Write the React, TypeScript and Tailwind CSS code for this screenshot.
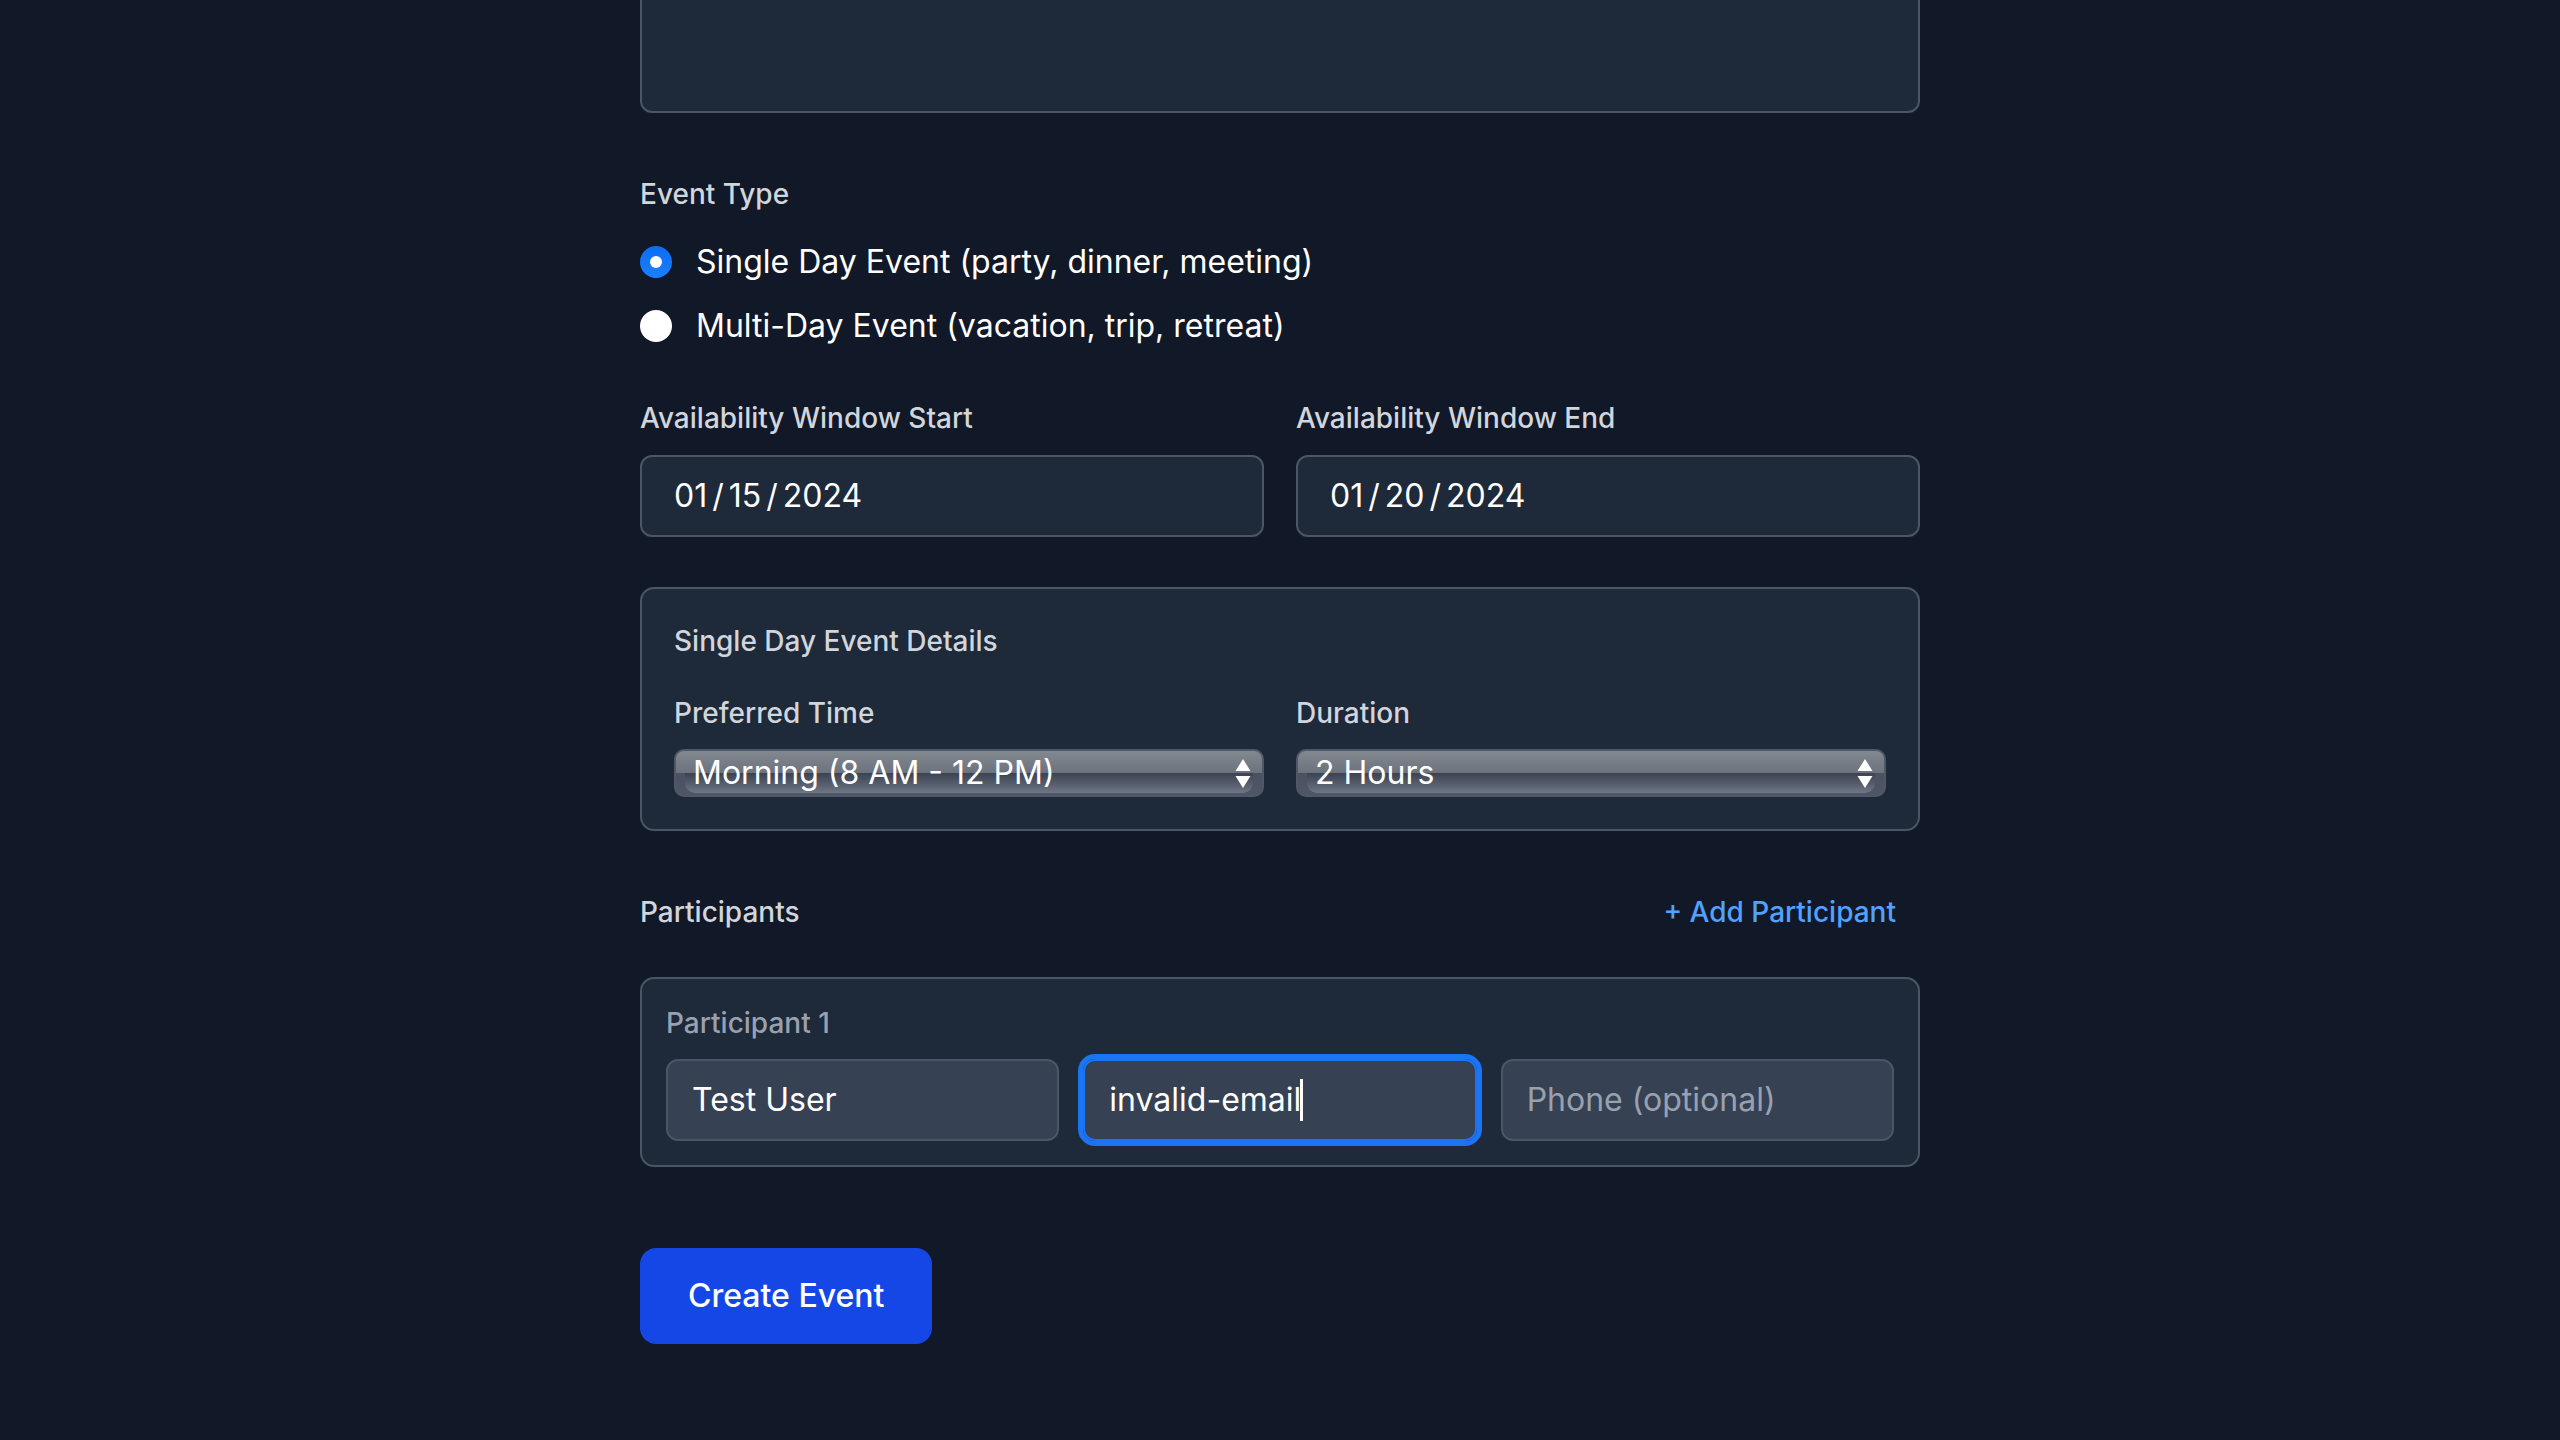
import React from 'react'

function FieldLabel({ children }: { children: React.ReactNode }) {
  return (
    <div className="mb-[17px] text-[28px] leading-[40px] font-medium text-gray-300">
      {children}
    </div>
  )
}

function Radio({ checked, label }: { checked: boolean; label: string }) {
  return (
    <div className="flex h-[48px] items-center">
      {checked ? (
        <div className="flex h-[32px] w-[32px] items-center justify-center rounded-full bg-[linear-gradient(to_bottom,#0d6cf4,#1a80ff)]">
          <div className="h-[12px] w-[12px] rounded-full bg-white" />
        </div>
      ) : (
        <div className="h-[32px] w-[32px] rounded-full bg-white" />
      )}
      <span className="ml-[24px] text-[32px] leading-[48px] text-white">{label}</span>
    </div>
  )
}

function DateField({ parts }: { parts: string[] }) {
  return (
    <div className="flex h-[82px] items-center gap-[5px] rounded-[12px] border-2 border-gray-600 bg-gray-800 px-[32px] text-[32px] text-white">
      <span>{parts[0]}</span>
      <span>/</span>
      <span>{parts[1]}</span>
      <span>/</span>
      <span>{parts[2]}</span>
    </div>
  )
}

function GlossySelect({ value }: { value: string }) {
  return (
    <div className="relative h-[48px] overflow-hidden rounded-[10px] border-2 border-[#505868] bg-[linear-gradient(to_bottom,#82888f_0%,#6d737e_50%,#4a5161_50%,#4f5666_100%)]">
      <div className="absolute bottom-[2px] left-[9px] right-[9px] top-[22px] rounded-b-[10px] bg-[linear-gradient(to_bottom,#3b4252,#565d6c_55%,#6f7686)]" />
      <div className="relative flex h-full items-center justify-between pl-[17px] pr-[11px]">
        <span className="text-[32px] leading-none text-white">{value}</span>
        <svg width="16" height="29" viewBox="0 0 16 29" className="fill-white">
          <polygon points="8,0 15.5,12 0.5,12" />
          <polygon points="0.5,17 15.5,17 8,29" />
        </svg>
      </div>
    </div>
  )
}

export default function App() {
  return (
    <div className="min-h-screen overflow-hidden bg-[#111827] font-['Inter',sans-serif]">
      <div className="mx-auto max-w-[1344px] px-[32px] pb-[96px]">
        {/* Description textarea, scrolled partly out of view */}
        <div className="-mt-[127px] h-[240px] w-full rounded-[12px] border-2 border-gray-600 bg-gray-800" />

        {/* Event type */}
        <div className="mt-[61px]">
          <div className="mb-[24px] text-[28px] leading-[40px] font-medium text-gray-300">
            Event Type
          </div>
          <div className="flex flex-col gap-[16px]">
            <Radio checked label="Single Day Event (party, dinner, meeting)" />
            <Radio checked={false} label="Multi-Day Event (vacation, trip, retreat)" />
          </div>
        </div>

        {/* Availability window */}
        <div className="mt-[48px] grid grid-cols-2 gap-[32px]">
          <div>
            <FieldLabel>Availability Window Start</FieldLabel>
            <DateField parts={['01', '15', '2024']} />
          </div>
          <div>
            <FieldLabel>Availability Window End</FieldLabel>
            <DateField parts={['01', '20', '2024']} />
          </div>
        </div>

        {/* Single day details */}
        <div className="mt-[50px] rounded-[14px] border-2 border-gray-600 bg-gray-800 p-[32px]">
          <div className="mb-[32px] text-[28px] leading-[40px] font-medium text-gray-300">
            Single Day Event Details
          </div>
          <div className="grid grid-cols-2 gap-[32px]">
            <div>
              <div className="mb-[16px] text-[28px] leading-[40px] font-medium text-gray-300">
                Preferred Time
              </div>
              <GlossySelect value="Morning (8 AM - 12 PM)" />
            </div>
            <div>
              <div className="mb-[16px] text-[28px] leading-[40px] font-medium text-gray-300">
                Duration
              </div>
              <GlossySelect value="2 Hours" />
            </div>
          </div>
        </div>

        {/* Participants */}
        <div className="mt-[48px] flex h-[66px] items-center justify-between">
          <span className="text-[28px] leading-[40px] font-medium text-gray-300">Participants</span>
          <button className="px-[24px] text-[28px] leading-[40px] font-medium text-blue-400">
            + Add Participant
          </button>
        </div>

        <div className="mt-[32px] rounded-[14px] border-2 border-gray-600 bg-gray-800 p-[24px]">
          <div className="mb-[16px] text-[28px] leading-[40px] font-medium text-gray-400">
            Participant 1
          </div>
          <div className="grid grid-cols-3 gap-[24px]">
            <div className="flex h-[82px] items-center rounded-[12px] border-2 border-gray-600 bg-gray-700 px-[24px] text-[32px] text-white">
              Test User
            </div>
            <div className="flex h-[82px] items-center rounded-[12px] border-2 border-[#1b74f4] bg-gray-700 px-[24px] text-[32px] text-white outline-[5px] outline-[#1b74f4]">
              <span>invalid-email</span>
              <span className="-ml-[1px] h-[42px] w-[3px] bg-white" />
            </div>
            <div className="flex h-[82px] items-center rounded-[12px] border-2 border-gray-600 bg-gray-700 px-[24px] text-[32px] text-gray-400">
              Phone (optional)
            </div>
          </div>
        </div>

        <button className="mt-[81px] h-[96px] rounded-[16px] bg-blue-700 px-[48px] text-[32px] font-medium text-white">
          Create Event
        </button>
      </div>
    </div>
  )
}
